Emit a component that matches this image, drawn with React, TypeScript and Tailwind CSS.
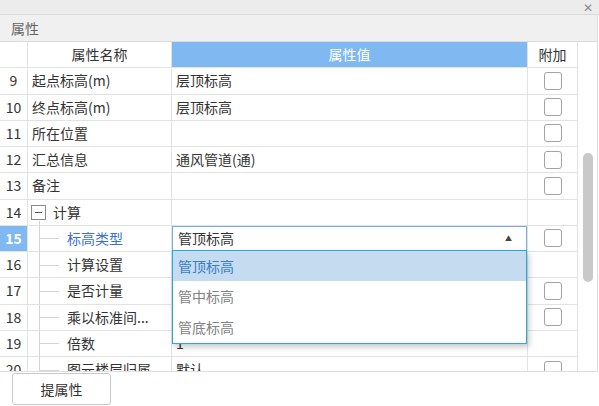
import React from 'react';

type Row = {
  no: number;
  name: string;
  value?: string;
  check: boolean;
  kind?: 'group' | 'child';
  selected?: boolean;
};

const rows: Row[] = [
  { no: 9, name: '起点标高(m)', value: '层顶标高', check: true },
  { no: 10, name: '终点标高(m)', value: '层顶标高', check: true },
  { no: 11, name: '所在位置', check: true },
  { no: 12, name: '汇总信息', value: '通风管道(通)', check: true },
  { no: 13, name: '备注', check: true },
  { no: 14, name: '计算', check: false, kind: 'group' },
  { no: 15, name: '标高类型', check: true, kind: 'child', selected: true },
  { no: 16, name: '计算设置', check: false, kind: 'child' },
  { no: 17, name: '是否计量', check: true, kind: 'child' },
  { no: 18, name: '乘以标准间...', check: true, kind: 'child' },
  { no: 19, name: '倍数', value: '1', check: false, kind: 'child' },
  { no: 20, name: '图元楼层归属', value: '默认', check: true, kind: 'child' },
];

const font = { fontFamily: '"Noto Sans CJK SC", "Noto Sans", sans-serif' };

const Checkbox = () => (
  <div className="w-[18px] h-[18px] rounded-[3px] border-[1.5px] border-[#a3a3a3] bg-white" />
);

const NameCell: React.FC<{ row: Row }> = ({ row }) => {
  if (row.kind === 'group') {
    return (
      <div className="relative flex items-center h-full pl-[3px]">
        <div className="w-[15px] h-[15px] border border-[#8a8a8a] flex items-center justify-center">
          <div className="w-[7px] h-px bg-[#555]" />
        </div>
        <span className="ml-[7px]">{row.name}</span>
        <div className="absolute left-[11px] top-[21px] bottom-0 w-px bg-[#d4d4d4]" />
      </div>
    );
  }
  if (row.kind === 'child') {
    return (
      <div className="relative flex items-center h-full pl-[39px]">
        <div className="absolute left-[11px] top-0 bottom-0 w-px bg-[#d4d4d4]" />
        <div className="absolute left-[12px] top-1/2 w-[19px] h-px bg-[#d4d4d4]" />
        <span className={row.selected ? 'text-[#3a6fdc]' : ''}>{row.name}</span>
      </div>
    );
  }
  return <div className="flex items-center h-full pl-[4px]">{row.name}</div>;
};

export default function App() {
  return (
    <div className="relative w-[599px] h-[406px] bg-white overflow-hidden text-[14px] text-[#333]" style={font}>
      {/* title strip */}
      <div className="h-[15px] bg-[#ececec] border-b border-[#dadada] flex items-center justify-end pr-[6px]">
        <span className="text-[#8c8c8c] text-[12px] leading-none">✕</span>
      </div>
      <div className="h-[27px] bg-[#f0f0f0] border-b border-r border-[#dcdcdc] w-[598px] flex items-center pl-[11px] text-[#666]">
        属性
      </div>

      {/* grid */}
      <div className="flex h-[330px] w-[598px] border-r border-b border-[#dedede] overflow-hidden">
        <div className="flex flex-col w-[578px]">
          <div className="flex h-[26.25px] shrink-0">
            <div className="w-[28px] border-r border-b border-[#e2e2e2]" />
            <div className="w-[144px] border-r border-b border-[#e2e2e2] flex items-center justify-center">属性名称</div>
            <div className="w-[356px] border-r border-b border-[#e2e2e2] bg-[#80b8f2] text-white flex items-center justify-center">属性值</div>
            <div className="w-[50px] border-r border-b border-[#e2e2e2] flex items-center justify-center">附加</div>
          </div>
          {rows.map((r) => (
            <div key={r.no} className="flex h-[26.25px] shrink-0">
              <div
                className={`w-[28px] border-r border-b border-[#e2e2e2] flex items-center justify-center ${
                  r.selected ? 'bg-[#80b8f2] text-white font-bold' : ''
                }`}
              >
                {r.no}
              </div>
              <div className="w-[144px] border-r border-b border-[#e2e2e2]">
                <NameCell row={r} />
              </div>
              <div className="w-[356px] border-r border-b border-[#e2e2e2]">
                {r.selected ? (
                  <div className="h-full border border-[#76ade8] flex items-center justify-between pl-[5px] pr-[14px] bg-white">
                    <span>管顶标高</span>
                    <span className="text-[#444] text-[7px] leading-none">▲</span>
                  </div>
                ) : (
                  <div className="h-full flex items-center pl-[4px]">{r.value}</div>
                )}
              </div>
              <div className="w-[50px] border-r border-b border-[#e2e2e2] flex items-center justify-center">
                {r.check && <Checkbox />}
              </div>
            </div>
          ))}
        </div>
        {/* scrollbar */}
        <div className="w-[19px] flex flex-col pt-[111px] pl-[5px]">
          <div className="w-[10px] h-[129px] rounded-full bg-[#c9c9c9]" />
        </div>
      </div>

      {/* dropdown */}
      <div className="absolute left-[172px] top-[250px] w-[355px] h-[94px] border border-[#2aa6dd] bg-white shadow-[2px_3px_6px_rgba(0,0,0,0.22)] flex flex-col">
        <div className="h-[30px] bg-[#c4dbf0] text-[#3c7dc6] flex items-center pl-[5px]">管顶标高</div>
        <div className="h-[31px] text-[#828282] flex items-center pl-[5px]">管中标高</div>
        <div className="h-[31px] text-[#828282] flex items-center pl-[5px]">管底标高</div>
      </div>

      {/* footer */}
      <div className="pl-[12px] pt-px">
        <button className="w-[99px] h-[32px] rounded-[3px] border border-[#c8c8c8] bg-white text-[#333]">提属性</button>
      </div>
    </div>
  );
}
